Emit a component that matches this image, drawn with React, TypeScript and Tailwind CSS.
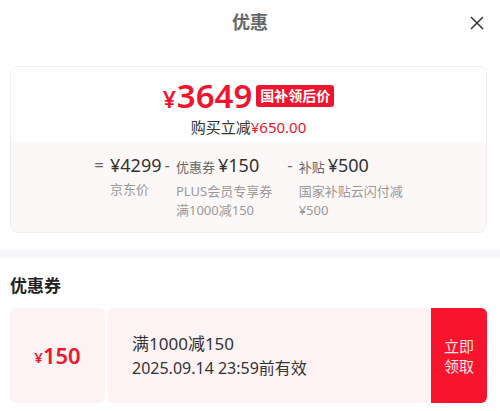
const FONT = { fontFamily: '"Noto Sans", "Noto Sans CJK SC", sans-serif' };

type Part = { sign: string; label?: string; value: string; notes: string[]; gap: string };

const PARTS: Part[] = [
  { sign: "=", value: "¥4299", notes: ["京东价"], gap: "" },
  { sign: "-", label: "优惠券", value: "¥150", notes: ["PLUS会员专享券", "满1000减150"], gap: "ml-[3px]" },
  { sign: "-", label: "补贴", value: "¥500", notes: ["国家补贴云闪付减", "¥500"], gap: "ml-[15px]" },
];

export default function App() {
  return (
    <main className="w-[500px] h-[411px] overflow-hidden bg-white text-[#333]" style={FONT}>
      {/* header */}
      <header className="relative flex h-[44px] items-center justify-center">
        <h1 className="text-[18px] font-bold leading-[24px] text-[#666]">优惠</h1>
        <button className="absolute right-[16px] top-[16px] text-[#333]">
          <svg width="14" height="14" viewBox="0 0 14 14" fill="none" stroke="currentColor" strokeWidth="1.5">
            <path d="M1 1L13 13M13 1L1 13" />
          </svg>
        </button>
      </header>

      {/* price breakdown card */}
      <section className="ml-[10px] mr-[13px] mt-[22px] overflow-hidden rounded-lg border border-[#eeeeee]">
        <div className="flex h-[75px] flex-col items-center bg-white pt-[12px]">
          <div className="flex h-[34px] items-baseline">
            <span className="mr-[1px] text-[23px] font-semibold leading-[34px] text-[#f0142e]">¥</span>
            <span className="text-[33px] font-semibold leading-[34px] text-[#f0142e]">3649</span>
            <span className="ml-[4px] self-center rounded-[3px] bg-[#f0142e] px-[4px] text-[14px] font-bold leading-[22px] text-white">
              国补领后价
            </span>
          </div>
          <p className="mt-[4px] text-[15px] leading-[20px] text-[#333]">
            购买立减<span className="text-[#f0142e]">¥650.00</span>
          </p>
        </div>
        <div className="flex h-[90px] justify-center bg-[#fdf8f8] pt-[11px]">
          {PARTS.map((p) => (
            <div key={p.value} className={`flex ${p.gap}`}>
              <span className="mr-[6px] text-[17px] leading-[24px] text-[#666]">{p.sign}</span>
              <div>
                <div className="flex items-baseline leading-[24px]">
                  {p.label && <span className="mr-[3px] text-[13px] text-[#666]">{p.label}</span>}
                  <span className="text-[18px] text-[#333]">{p.value}</span>
                </div>
                <div className="mt-[3px] text-[13px] leading-[19px] text-[#999]">
                  {p.notes.map((n) => (
                    <div key={n}>{n}</div>
                  ))}
                </div>
              </div>
            </div>
          ))}
        </div>
      </section>

      <div className="mt-[17px] h-[8px] bg-[#f7f7fa]" />

      {/* coupons */}
      <h2 className="ml-[10px] mt-[16px] text-[17px] font-bold leading-[24px] text-[#222]">优惠券</h2>
      <div className="ml-[10px] mr-[13px] mt-[10px] flex h-[95px] gap-[3px]">
        <div className="flex w-[95px] items-center justify-center rounded-md bg-[#fdf3f4] text-[#f0142e]">
          <span className="mt-[4px] text-[15px] font-semibold">¥</span>
          <span className="text-[22px] font-semibold">150</span>
        </div>
        <div className="flex flex-1 overflow-hidden rounded-md bg-[#fdf3f4]">
          <div className="flex flex-1 flex-col justify-center pl-[24px] text-[#333]">
            <p className="text-[17px] leading-[25px]">满1000减150</p>
            <p className="text-[16px] leading-[25px]">2025.09.14 23:59前有效</p>
          </div>
          <button className="flex w-[56px] flex-col items-center justify-center bg-[#f7142c] text-[15px] leading-[20px] text-[#fde8ea]">
            <span>立即</span>
            <span>领取</span>
          </button>
        </div>
      </div>
    </main>
  );
}
